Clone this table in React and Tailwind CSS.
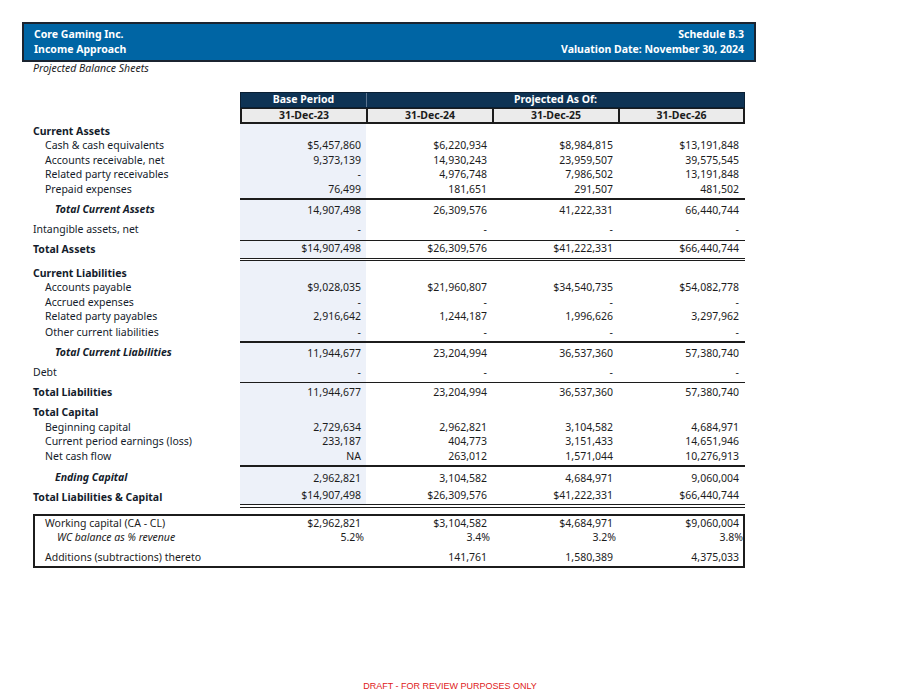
import React from 'react';

const font = { fontFamily: '"Noto Sans", "Liberation Sans", sans-serif' };

const rows = [
  { label: 'Current Assets', kind: 'sec', h: 'h-[15px]', vals: ['', '', '', ''] },
  { label: 'Cash & cash equivalents', kind: 'item', h: 'h-[14.5px]', vals: ['$5,457,860', '$6,220,934', '$8,984,815', '$13,191,848'] },
  { label: 'Accounts receivable, net', kind: 'item', h: 'h-[14.5px]', vals: ['9,373,139', '14,930,243', '23,959,507', '39,575,545'] },
  { label: 'Related party receivables', kind: 'item', h: 'h-[14.5px]', vals: ['-', '4,976,748', '7,986,502', '13,191,848'] },
  { label: 'Prepaid expenses', kind: 'item', h: 'h-[15px]', vals: ['76,499', '181,651', '291,507', '481,502'] },
  { label: 'Total Current Assets', kind: 'total', h: 'h-[22px]', pad: 'pt-[2px]', line: 'border-t-2 border-[#1c1c1c]', vals: ['14,907,498', '26,309,576', '41,222,331', '66,440,744'] },
  { label: 'Intangible assets, net', kind: 'plain', h: 'h-[20px]', pad: 'pt-[1px]', vals: ['-', '-', '-', '-'] },
  { label: 'Total Assets', kind: 'bold', h: 'h-[21px]', line: 'border-t-[1.5px] border-b-[3px] border-double border-[#1c1c1c]', vals: ['$14,907,498', '$26,309,576', '$41,222,331', '$66,440,744'] },
  { label: 'Current Liabilities', kind: 'sec', h: 'h-[20px]', pad: 'pt-[6px]', vals: ['', '', '', ''] },
  { label: 'Accounts payable', kind: 'item', h: 'h-[15px]', vals: ['$9,028,035', '$21,960,807', '$34,540,735', '$54,082,778'] },
  { label: 'Accrued expenses', kind: 'item', h: 'h-[14.5px]', vals: ['-', '-', '-', '-'] },
  { label: 'Related party payables', kind: 'item', h: 'h-[14.5px]', vals: ['2,916,642', '1,244,187', '1,996,626', '3,297,962'] },
  { label: 'Other current liabilities', kind: 'item', h: 'h-[16px]', vals: ['-', '-', '-', '-'] },
  { label: 'Total Current Liabilities', kind: 'total', h: 'h-[22px]', pad: 'pt-[2px]', line: 'border-t-2 border-[#1c1c1c]', vals: ['11,944,677', '23,204,994', '36,537,360', '57,380,740'] },
  { label: 'Debt', kind: 'plain', h: 'h-[19px]', pad: 'pt-[1px]', vals: ['-', '-', '-', '-'] },
  { label: 'Total Liabilities', kind: 'bold', h: 'h-[21px]', pad: 'pt-[1px]', line: 'border-t-[1.5px] border-[#1c1c1c]', vals: ['11,944,677', '23,204,994', '36,537,360', '57,380,740'] },
  { label: 'Total Capital', kind: 'sec', h: 'h-[18px]', pad: 'pt-[3px]', vals: ['', '', '', ''] },
  { label: 'Beginning capital', kind: 'item', h: 'h-[14.5px]', vals: ['2,729,634', '2,962,821', '3,104,582', '4,684,971'] },
  { label: 'Current period earnings (loss)', kind: 'item', h: 'h-[14.5px]', vals: ['233,187', '404,773', '3,151,433', '14,651,946'] },
  { label: 'Net cash flow', kind: 'item', h: 'h-[15px]', vals: ['NA', '263,012', '1,571,044', '10,276,913'] },
  { label: 'Ending Capital', kind: 'total', h: 'h-[22px]', pad: 'pt-[4px]', line: 'border-t-2 border-[#1c1c1c]', vals: ['2,962,821', '3,104,582', '4,684,971', '9,060,004'] },
  { label: 'Total Liabilities & Capital', kind: 'bold', h: 'h-[21px]', pad: 'pt-[1px]', line: 'border-b-[4px] border-double border-[#1c1c1c]', vals: ['$14,907,498', '$26,309,576', '$41,222,331', '$66,440,744'] },
];

const labelClass = {
  sec: 'pl-0 font-bold',
  item: 'pl-[12px]',
  total: 'pl-[22px] font-bold italic',
  plain: 'pl-0',
  bold: 'pl-0 font-bold',
};

const Row = ({ row }) => (
  <div className={`flex ${row.h}`}>
    <div className={`w-[207px] flex items-center text-[10.5px] text-[#141c2b] ${row.pad || ''} ${labelClass[row.kind]}`}>
      {row.label}
    </div>
    <div className={`flex w-[505px] ${row.line || ''}`}>
      {row.vals.map((v, i) => (
        <div
          key={i}
          className={`flex items-center justify-end text-[10.5px] text-[#1c1c1c] ${row.pad || ''} ${i === 0 ? 'bg-[#edf1f9]' : ''} ${i === 3 ? 'w-[127px] pr-[6px]' : 'w-[126px] pr-[5px]'}`}
        >
          {v}
        </div>
      ))}
    </div>
  </div>
);

export default function App() {
  return (
    <div className="w-[900px] h-[695px] bg-white flex flex-col" style={font}>
      <div className="ml-[22px] mt-[22px] w-[734px] h-[40px] bg-[#0065a4] border-2 border-[#1b2430] flex justify-between items-center px-[10px] text-white text-[10.5px] font-bold leading-[15px]">
        <div>
          <div>Core Gaming Inc.</div>
          <div>Income Approach</div>
        </div>
        <div className="text-right">
          <div>Schedule B.3</div>
          <div>Valuation Date: November 30, 2024</div>
        </div>
      </div>
      <div className="ml-[33px] text-[10.5px] leading-[12px] italic text-[#1c1c1c]">Projected Balance Sheets</div>

      <div className="ml-[33px] mt-[18px] w-[712px] flex flex-col">
        <div className="flex h-[16px]">
          <div className="w-[207px]" />
          <div className="flex w-[505px] bg-[#0e3354] border border-[#0a1f33] text-white text-[10.5px] font-bold">
            <div className="w-[126px] flex items-center justify-center border-r border-[#5c7590]">Base Period</div>
            <div className="flex-1 flex items-center justify-center">Projected As Of:</div>
          </div>
        </div>
        <div className="flex h-[16px]">
          <div className="w-[207px]" />
          <div className="flex w-[505px] bg-[#ebebeb] border-2 border-t border-[#1c1c1c] text-[#1c1c1c] text-[10.5px] font-bold">
            <div className="w-[126px] flex items-center justify-center border-r-2 border-[#1c1c1c]">31-Dec-23</div>
            <div className="w-[126px] flex items-center justify-center border-r-2 border-[#1c1c1c]">31-Dec-24</div>
            <div className="w-[126px] flex items-center justify-center border-r-2 border-[#1c1c1c]">31-Dec-25</div>
            <div className="flex-1 flex items-center justify-center">31-Dec-26</div>
          </div>
        </div>
        {rows.map((r) => (
          <Row key={r.label} row={r} />
        ))}

        <div className="mt-[6px] pt-[1px] border-2 border-[#1c1c1c] w-[712px] text-[10.5px] text-[#1c1c1c] flex flex-col">
          <div className="flex h-[14.5px] items-center">
            <div className="w-[205px] pl-[10px]">Working capital (CA - CL)</div>
            <div className="w-[126px] text-right pr-[5px]">$2,962,821</div>
            <div className="w-[126px] text-right pr-[5px]">$3,104,582</div>
            <div className="w-[126px] text-right pr-[5px]">$4,684,971</div>
            <div className="flex-1 text-right pr-[4px]">$9,060,004</div>
          </div>
          <div className="flex h-[14.5px] items-center">
            <div className="w-[205px] pl-[22px] italic">WC balance as % revenue</div>
            <div className="w-[126px] text-right pr-[2px]">5.2%</div>
            <div className="w-[126px] text-right pr-[2px]">3.4%</div>
            <div className="w-[126px] text-right pr-[2px]">3.2%</div>
            <div className="flex-1 text-right pr-0">3.8%</div>
          </div>
          <div className="flex h-[20px] items-center pt-[5px]">
            <div className="w-[205px] pl-[10px]">Additions (subtractions) thereto</div>
            <div className="w-[126px] text-right pr-[5px]"></div>
            <div className="w-[126px] text-right pr-[5px]">141,761</div>
            <div className="w-[126px] text-right pr-[5px]">1,580,389</div>
            <div className="flex-1 text-right pr-[4px]">4,375,033</div>
          </div>
        </div>
      </div>

      <div className="mt-auto mb-[2px] text-center text-[9px] text-[#e02020]" style={{ fontFamily: '"Liberation Sans", sans-serif' }}>
        DRAFT - FOR REVIEW PURPOSES ONLY
      </div>
    </div>
  );
}
